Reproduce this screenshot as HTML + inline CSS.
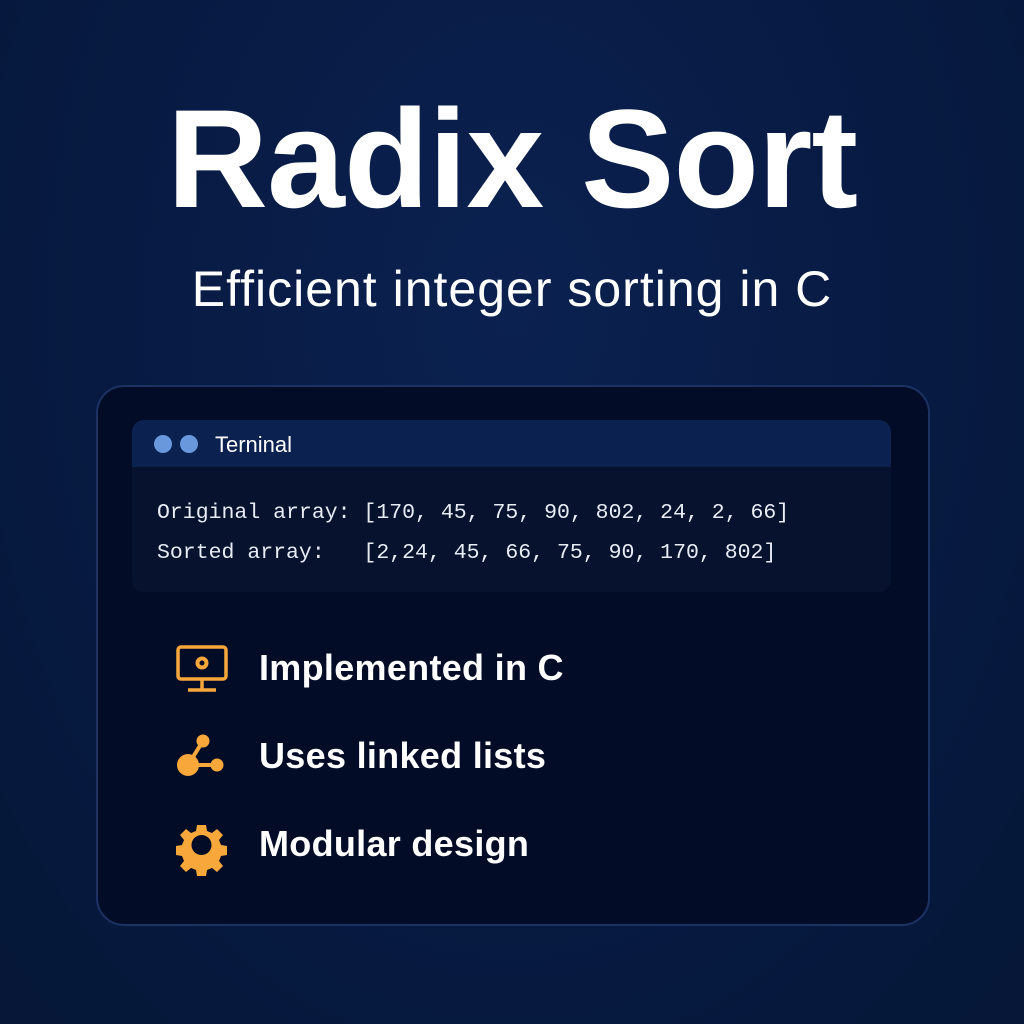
<!DOCTYPE html>
<html><head><style>
body{margin:0;width:1024px;height:1024px;overflow:hidden;background:radial-gradient(ellipse at 50% 30%,#0b2150 0%,#071a42 55%,#061737 100%);font-family:"Liberation Sans",sans-serif;position:relative}
.t{position:absolute;left:0;width:1024px;text-align:center;color:#fff}
h1{position:absolute;left:0;width:1024px;top:78px;margin:0;text-align:center;color:#fff;font-size:140px;font-weight:bold;letter-spacing:-1px}
.card{position:absolute;left:96px;top:385px;width:830px;height:537px;border:2px solid #1c3263;border-radius:28px;background:#020c26}
.term{position:absolute;left:132px;top:420px;width:759px;height:172px;border-radius:12px;background:#06122e;overflow:hidden}
.hd{height:47px;background:#0b214f;position:relative}
.dot{position:absolute;top:15px;width:18px;height:18px;border-radius:50%;background:#6a98dc}
.mono{position:absolute;left:25px;font-family:"Liberation Mono",monospace;font-size:21.5px;color:#e8ecf4;white-space:pre}
.f{position:absolute;left:259px;color:#fff;font-size:36px;font-weight:bold;letter-spacing:0.3px}
</style></head><body>
<h1>Radix Sort</h1>
<div class="t" style="top:260px;font-size:50px;letter-spacing:1px">Efficient integer sorting in C</div>
<div class="card"></div>
<div class="term">
<div class="hd"><div class="dot" style="left:22px"></div><div class="dot" style="left:48px"></div>
<div style="position:absolute;left:83px;top:12px;color:#fff;font-size:22px">Terninal</div></div>
<div class="mono" style="top:81px">Original array: [170, 45, 75, 90, 802, 24, 2, 66]</div>
<div class="mono" style="top:121px">Sorted array:   [2,24, 45, 66, 75, 90, 170, 802]</div>
</div>
<svg style="position:absolute;left:0;top:0" width="1024" height="1024">
<g fill="none" stroke="#f8a73a" stroke-width="3.5">
<rect x="178" y="647" width="48" height="32" rx="3"/>
<line x1="202" y1="679" x2="202" y2="689"/><line x1="188" y1="690" x2="216" y2="690"/>
<circle cx="202" cy="663" r="4.5" stroke-width="4"/>
<line x1="203" y1="741" x2="188" y2="765" stroke-width="4"/><line x1="188" y1="765" x2="217" y2="765" stroke-width="4"/>
</g>
<g fill="#f8a73a">
<circle cx="203" cy="741" r="6.5"/><circle cx="188" cy="765" r="11"/><circle cx="217" cy="765" r="6.5"/>
<path fill-rule="evenodd" d="M197 825h9l1 6 5 2 5-4 6 6-4 5 2 5 6 1v9l-6 1-2 5 4 5-6 6-5-4-5 2-1 6h-9l-1-6-5-2-5 4-6-6 4-5-2-5-6-1v-9l6-1 2-5-4-5 6-6 5 4 5-2z M201.5 835a10 10 0 1 0 0.01 0z"/>
</g>
</svg>
<div class="f" style="top:647px">Implemented in C</div>
<div class="f" style="top:735px">Uses linked lists</div>
<div class="f" style="top:823px">Modular design</div>
</body></html>
